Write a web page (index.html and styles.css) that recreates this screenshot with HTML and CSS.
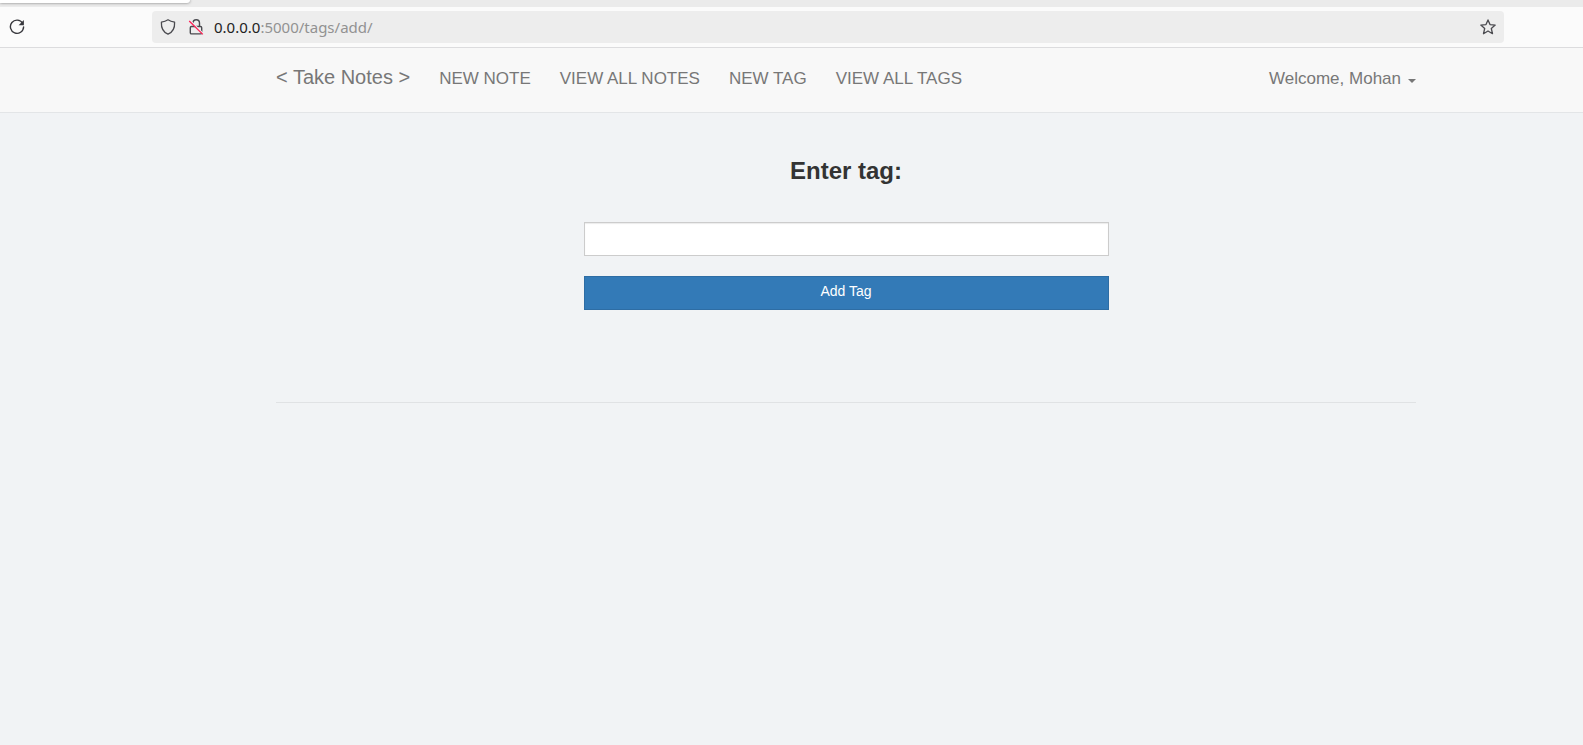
FILE: index.html
```html
<!DOCTYPE html>
<html lang="en">
<head>
<meta charset="utf-8">
<title>Take Notes</title>
<link rel="stylesheet" href="styles.css">
</head>
<body>
<div class="browser">
  <div class="tab-strip"><div class="tab"></div></div>
  <div class="toolbar">
    <button class="icon-button" type="button" aria-label="Reload">
      <svg width="16" height="16" viewBox="0 0 16 16"><path d="M13.6 4.2A6.6 6.6 0 1 0 14.6 8" fill="none" stroke="#38383d" stroke-width="1.4" stroke-linecap="round"/><path d="M14.9 1v5.3H9.6z" fill="#38383d"/></svg>
    </button>
    <div class="url-bar">
      <svg width="16" height="16" viewBox="0 0 16 16"><path d="M8 .8C6.2 2 4 2.800 1.400 3.200 1.100 8.600 3 13 8 15.200c5-2.200 6.900-6.600 6.600-12C12 2.800 9.800 2 8 .8z" fill="none" stroke="#4a4a4f" stroke-width="1.300" stroke-linejoin="round"/></svg>
      <svg class="lock" width="16" height="16" viewBox="0 0 16 16"><path d="M5 5V4a3 3 0 0 1 6.500 0v3.300M3.500 7.500h9a1.200 1.200 0 0 1 1.200 1.200v5a1.200 1.200 0 0 1-1.200 1.200h-9a1.200 1.200 0 0 1-1.200-1.200v-5a1.200 1.200 0 0 1 1.200-1.200z" fill="none" stroke="#4a4a4f" stroke-width="1.400"/><path d="M1.900 1.200l13 13" stroke="#ededed" stroke-width="1.500"/><path d="M1.200 2l13.600 13.400" stroke="#ff2056" stroke-width="1.300"/></svg>
      <span class="url"><span class="host">0.0.0.0</span>:5000/tags/add/</span>
      <svg width="16" height="16" viewBox="0 0 16 16"><path d="M8 .9l2 4.700 5.200.5-3.900 3.400 1.200 5.200L8 12l-4.500 2.700 1.200-5.200L.8 6.100 6 5.600z" fill="none" stroke="#4a4a4f" stroke-width="1.300" stroke-linejoin="round"/></svg>
    </div>
  </div>
</div>
<nav class="navbar">
  <div class="container nav-row">
    <a class="brand" href="#">&lt; Take Notes &gt;</a>
    <a href="#">NEW NOTE</a>
    <a href="#">VIEW ALL NOTES</a>
    <a href="#">NEW TAG</a>
    <a href="#">VIEW ALL TAGS</a>
    <a class="account" href="#">Welcome, Mohan <span class="caret"></span></a>
  </div>
</nav>
<main class="container">
  <form class="tag-form">
    <h1><label for="tag">Enter tag:</label></h1>
    <input id="tag" type="text">
    <button type="button">Add Tag</button>
  </form>
  <hr>
</main>
</body>
</html>
```

FILE: styles.css
```css
* {
  box-sizing: border-box;
}

body {
  margin: 0;
  background: #f1f3f5;
  color: #333;
  font: 14px/20px "Liberation Sans", Arial, sans-serif;
}

.tab-strip {
  height: 7px;
  background: #ebebeb;
}

.tab {
  width: 190px;
  height: 3px;
  background: #fff;
  border-radius: 0 0 4px 0;
  box-shadow: 0 0 3px rgba(0, 0, 0, 0.5);
}

.toolbar {
  display: flex;
  align-items: center;
  justify-content: space-between;
  height: 41px;
  padding: 0 79px 0 9px;
  background: #fbfbfb;
  border-bottom: 1px solid #dcdcde;
}

.toolbar svg {
  display: block;
  flex: none;
}

.icon-button {
  padding: 0;
  border: 0;
  background: none;
}

.url-bar {
  display: flex;
  align-items: center;
  flex: 1;
  height: 32px;
  margin-left: 127px;
  padding: 0 8px;
  background: #ededed;
  border-radius: 4px;
}

.lock {
  margin: 0 10px 0 12px;
}

.url {
  flex: 1;
  color: #929292;
  font: 15px/20px "Noto Sans", sans-serif;
}

.host {
  color: #222;
}

.navbar,
main {
  padding-left: 109px;
}

.navbar {
  background: #f8f8f8;
  border-bottom: 1px solid #e3e5e7;
}

.container {
  max-width: 1140px;
  margin: 0 auto;
}

main.container {
  max-width: 1249px;
}

.nav-row {
  display: flex;
  align-items: baseline;
  gap: 29px;
  height: 64px;
  padding-top: 19px;
}

.nav-row a {
  color: #777;
  font-size: 17px;
  text-decoration: none;
}

.nav-row .brand {
  font-size: 20px;
}

.nav-row .account {
  display: flex;
  align-items: center;
  gap: 7px;
  margin-left: auto;
}

.caret {
  border-top: 4px solid #777;
  border-right: 4px solid transparent;
  border-left: 4px solid transparent;
  margin-top: 3px;
}

.tag-form {
  display: flex;
  flex-direction: column;
  gap: 20px;
  max-width: 525px;
  margin: 0 auto;
  padding: 44px 0 92px;
}

h1 {
  margin: 0 0 17px;
  font-size: 24px;
  line-height: 28px;
  text-align: center;
}

input {
  width: 100%;
  height: 34px;
  padding: 6px 12px;
  border: 1px solid #ccc;
  background: #fff;
  box-shadow: inset 0 1px 1px rgba(0, 0, 0, 0.08);
  font: inherit;
}

.tag-form button {
  height: 34px;
  padding: 4px 12px 8px;
  border: 1px solid #2e6da4;
  background: #337ab7;
  color: #fff;
  font: inherit;
}

hr {
  margin: 0;
  border: 0;
  border-top: 1px solid #e0e2e4;
}
```
